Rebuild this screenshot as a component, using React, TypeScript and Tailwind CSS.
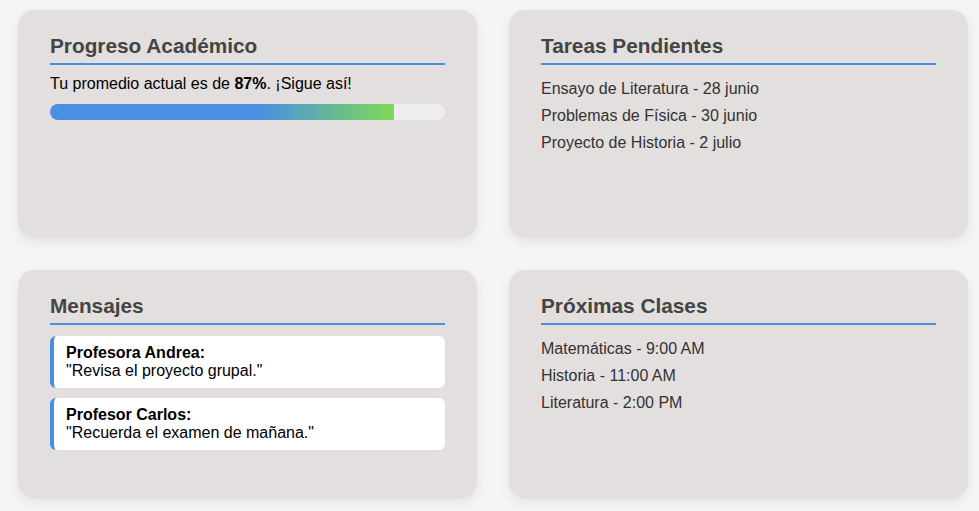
export default function App() {
  const tareas = ['Ensayo de Literatura - 28 junio', 'Problemas de Física - 30 junio', 'Proyecto de Historia - 2 julio']
  const clases = ['Matemáticas - 9:00 AM', 'Historia - 11:00 AM', 'Literatura - 2:00 PM']
  const mensajes = [
    { from: 'Profesora Andrea:', text: '"Revisa el proyecto grupal."' },
    { from: 'Profesor Carlos:', text: '"Recuerda el examen de mañana."' },
  ]
  const promedio = 87

  const card = 'bg-[#e2dfde] rounded-2xl px-8 pt-6 pb-8 shadow-[0_4px_12px_rgba(0,0,0,0.08)]'
  const title = 'text-[20.8px] font-bold text-[#444] pb-1.5 border-b-2 border-[#4a90e2] mb-2.5 leading-[1.12]'

  return (
    <div className="min-h-screen bg-[#f4f5f7] font-['Liberation_Sans',Arial,sans-serif]">
      <div className="grid grid-cols-[459px_459px] auto-rows-[228px] gap-8 pl-[18px] pt-[10px]">
        <section className={card}>
          <h2 className={title}>Progreso Académico</h2>
          <p className="text-base leading-[18.4px] text-black">
            Tu promedio actual es de <strong>{promedio}%</strong>. ¡Sigue así!
          </p>
          <div className="mt-2.5 h-4 rounded-full bg-[#eeeeee] overflow-hidden">
            <div
              className="h-full bg-[linear-gradient(90deg,#4a90e2_61%,#7ed957)]"
              style={{ width: `${promedio}%` }}
            />
          </div>
        </section>

        <section className={card}>
          <h2 className={title}>Tareas Pendientes</h2>
          <ul className="text-base text-[#333]">
            {tareas.map((t) => (
              <li key={t} className="leading-[27px]">{t}</li>
            ))}
          </ul>
        </section>

        <section className={card}>
          <h2 className={title}>Mensajes</h2>
          <div className="flex flex-col gap-2.5 pt-[1px]">
            {mensajes.map((m) => (
              <div key={m.from} className="bg-white rounded-md border-l-4 border-[#4a90e2] px-3 py-2 text-base text-black leading-[18px]">
                <div className="font-bold">{m.from}</div>
                <div>{m.text}</div>
              </div>
            ))}
          </div>
        </section>

        <section className={card}>
          <h2 className={title}>Próximas Clases</h2>
          <ul className="text-base text-[#333]">
            {clases.map((c) => (
              <li key={c} className="leading-[27px]">{c}</li>
            ))}
          </ul>
        </section>
      </div>
    </div>
  )
}
